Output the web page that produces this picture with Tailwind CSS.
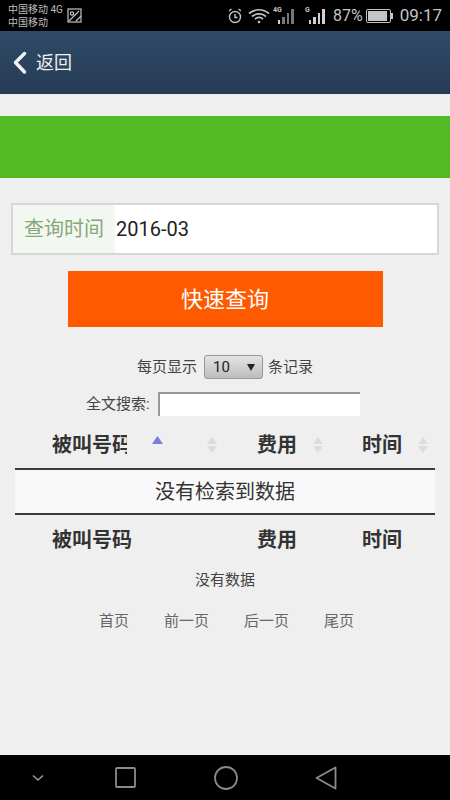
<!DOCTYPE html>
<html lang="zh">
<head>
  <meta charset="UTF-8">
  <title>查询</title>
  <script src="https://cdn.jsdelivr.net/npm/@tailwindcss/browser@4"></script>
</head>
<body class="w-[450px] h-[800px] overflow-hidden bg-[#efefef] flex flex-col font-['Roboto','Noto_Sans_CJK_SC',sans-serif] text-[#333]">
  <!-- status bar -->
  <div class="h-[31px] bg-black flex items-center text-[#bdbdbd] shrink-0">
    <div class="pl-2 text-[10px] leading-[13px] w-[60px] whitespace-nowrap">
      <div>中国移动 4G</div>
      <div>中国移动</div>
    </div>
    <svg class="ml-[7px]" width="15" height="15" viewBox="0 0 15 15" fill="none" stroke="#c4c4c4" stroke-width="1.2"><rect x="1" y="1" width="13" height="13"/><circle cx="5" cy="5.5" r="1.6"/><path d="M2 13 12 3M9 13l5-5"/></svg>
    <div class="ml-auto flex items-center pr-[8px]">
      <svg width="16" height="16" viewBox="0 0 16 16" fill="none" stroke="#c4c4c4" stroke-width="1.4"><circle cx="8" cy="9" r="5.5"/><path d="M8 6v3.5h2.5M2 3l2.5-2M14 3l-2.5-2"/></svg>
      <svg class="ml-[5px]" width="22" height="16" viewBox="0 0 22 16" fill="none" stroke="#c4c4c4" stroke-width="1.7"><path d="M1 5.500c6-5 14-5 20 0M4 8.500c4-3.500 10-3.500 14 0M7 11c2.500-2 5.500-2 8 0"/><circle cx="11" cy="14" r="1.300" fill="#c4c4c4" stroke="none"/></svg>
      <div class="relative ml-[3px] w-[25px] h-[20px]">
        <span class="absolute left-0 top-0 text-[7px] font-bold leading-[9px] text-[#c4c4c4]">4G</span>
        <div class="absolute left-[5px] bottom-[2px] flex items-end gap-[2px]">
          <i class="block w-[2.500px] h-[4px] bg-[#d0d0d0]"></i><i class="block w-[2.500px] h-[7px] bg-[#777]"></i><i class="block w-[2.500px] h-[11px] bg-[#777]"></i><i class="block w-[2.500px] h-[15px] bg-[#777]"></i>
        </div>
      </div>
      <div class="relative ml-[7px] w-[25px] h-[20px]">
        <span class="absolute left-0 top-0 text-[7px] font-bold leading-[9px] text-[#c4c4c4]">G</span>
        <div class="absolute left-[4px] bottom-[2px] flex items-end gap-[2px]">
          <i class="block w-[2.500px] h-[4px] bg-[#d0d0d0]"></i><i class="block w-[2.500px] h-[7px] bg-[#d0d0d0]"></i><i class="block w-[2.500px] h-[11px] bg-[#d0d0d0]"></i><i class="block w-[2.500px] h-[15px] bg-[#d0d0d0]"></i>
        </div>
      </div>
      <span class="ml-[3px] text-[16px] leading-none text-[#c4c4c4]">87%</span>
      <div class="ml-[3px] flex items-center">
        <div class="w-[25px] h-[14px] border-[1.500px] border-[#c4c4c4] rounded-[2px] p-[1px] flex"><div class="w-[19px] bg-[#c4c4c4]"></div></div>
        <div class="w-[2px] h-[6px] bg-[#c4c4c4]"></div>
      </div>
      <span class="ml-[7px] text-[17px] leading-none text-[#c4c4c4]">09:17</span>
    </div>
  </div>

  <!-- header -->
  <div class="h-[63px] shrink-0 bg-gradient-to-b from-[#2f4a68] to-[#263c55] flex items-center pl-[13px] text-[#f0f0f0]">
    <svg width="14" height="24" viewBox="0 0 14 24" fill="none" stroke="#eef2f5" stroke-width="3.500" stroke-linecap="round" stroke-linejoin="round"><path d="M11.500 2.500 2.500 11.500l9 9.500"/></svg>
    <span class="ml-[9px] text-[18px]">返回</span>
  </div>

  <!-- green banner -->
  <div class="h-[62px] mt-[22px] shrink-0 bg-[#52bb24]"></div>

  <!-- query form -->
  <div class="mx-[11px] mt-[25px] h-[52px] flex border-2 border-[#d3dbd0] bg-white shrink-0">
    <div class="w-[102px] bg-[#f3f7f1] text-[#86a878] text-[20px] flex items-center justify-center">查询时间</div>
    <div class="flex-1 pl-[1px] flex items-center text-[20px] text-[#222]">2016-03</div>
  </div>
  <div class="mx-auto mt-[16px] w-[315px] h-[56px] shrink-0 bg-[#ff5a00] text-white text-[22px] flex items-center justify-center">快速查询</div>

  <!-- table controls -->
  <div class="mt-[28px] h-[24px] shrink-0 flex items-center justify-center text-[15px] text-[#444]">
    <span>每页显示</span>
    <div class="ml-[7px] w-[59px] h-[24px] rounded-[3px] border border-[#999] bg-gradient-to-b from-[#e4e4e4] to-[#bdbdbd] flex items-center justify-between pl-2 pr-[7px] text-[15px] text-[#222]">
      <span>10</span>
      <svg width="8" height="7" viewBox="0 0 8 7" fill="#222"><path d="M0 0h8L4 7z"/></svg>
    </div>
    <span class="ml-[5px]">条记录</span>
  </div>
  <div class="mt-[13px] h-[24px] shrink-0 flex items-center text-[15px] text-[#444]">
    <span class="ml-[86px]">全文搜索:</span>
    <div class="ml-[8px] w-[202px] h-[24px] bg-white border-t-2 border-l-2 border-[#999]"></div>
  </div>

  <!-- table -->
  <div class="mx-[15px] shrink-0">
    <div class="h-[54px] pt-[6px] flex items-center border-b-2 border-[#3a3a3a] text-[20px] font-bold text-[#333]">
      <span class="ml-[37px] w-[75px] overflow-hidden whitespace-nowrap">被叫号码</span>
      <svg class="ml-[25px] -mt-[10px]" width="11" height="8" viewBox="0 0 11 8" fill="#7d7ddb"><path d="M5.500 0 11 8H0z"/></svg>
      <svg class="ml-[44px]" width="10" height="16" viewBox="0 0 10 16" fill="#dcdcdc"><path d="M5 0l5 7H0zM5 16l5-7H0z"/></svg>
      <span class="ml-[40px] w-[40px]">费用</span>
      <svg class="ml-[16px]" width="10" height="16" viewBox="0 0 10 16" fill="#dcdcdc"><path d="M5 0l5 7H0zM5 16l5-7H0z"/></svg>
      <span class="ml-[39px] w-[40px]">时间</span>
      <svg class="ml-[16px]" width="10" height="16" viewBox="0 0 10 16" fill="#dcdcdc"><path d="M5 0l5 7H0zM5 16l5-7H0z"/></svg>
    </div>
    <div class="h-[45px] bg-[#f9f9f9] flex items-center justify-center border-b-2 border-[#3a3a3a] text-[20px] text-[#333]">没有检索到数据</div>
    <div class="h-[50px] flex items-center text-[20px] font-bold text-[#333]">
      <span class="ml-[37px]">被叫号码</span>
      <span class="ml-[125px]">费用</span>
      <span class="ml-[65px]">时间</span>
    </div>
  </div>
  <div class="mt-[5px] h-[20px] leading-[20px] text-center text-[15px] text-[#444] shrink-0">没有数据</div>
  <div class="mt-[21px] h-[20px] leading-[20px] shrink-0 flex text-[15px] text-[#666]">
    <span class="ml-[99px]">首页</span>
    <span class="ml-[35px]">前一页</span>
    <span class="ml-[35px]">后一页</span>
    <span class="ml-[35px]">尾页</span>
  </div>

  <!-- nav bar -->
  <div class="mt-auto h-[45px] shrink-0 bg-black flex items-center">
    <svg class="ml-[32px]" width="12" height="8" viewBox="0 0 12 8" fill="none" stroke="#999" stroke-width="1.600"><path d="M1 1.500 6 6l5-4.500"/></svg>
    <svg class="ml-[71px]" width="21" height="21" viewBox="0 0 21 21" fill="none" stroke="#8a8a8a" stroke-width="1.800"><rect x="1" y="1" width="19" height="19" rx="1"/></svg>
    <svg class="ml-[78px]" width="24" height="24" viewBox="0 0 24 24" fill="none" stroke="#8a8a8a" stroke-width="1.800"><circle cx="12" cy="12" r="11"/></svg>
    <svg class="ml-[77px]" width="22" height="24" viewBox="0 0 22 24" fill="none" stroke="#8a8a8a" stroke-width="1.800" stroke-linejoin="round"><path d="M20.500 1.500v21L1.500 12z"/></svg>
  </div>
</body>
</html>
